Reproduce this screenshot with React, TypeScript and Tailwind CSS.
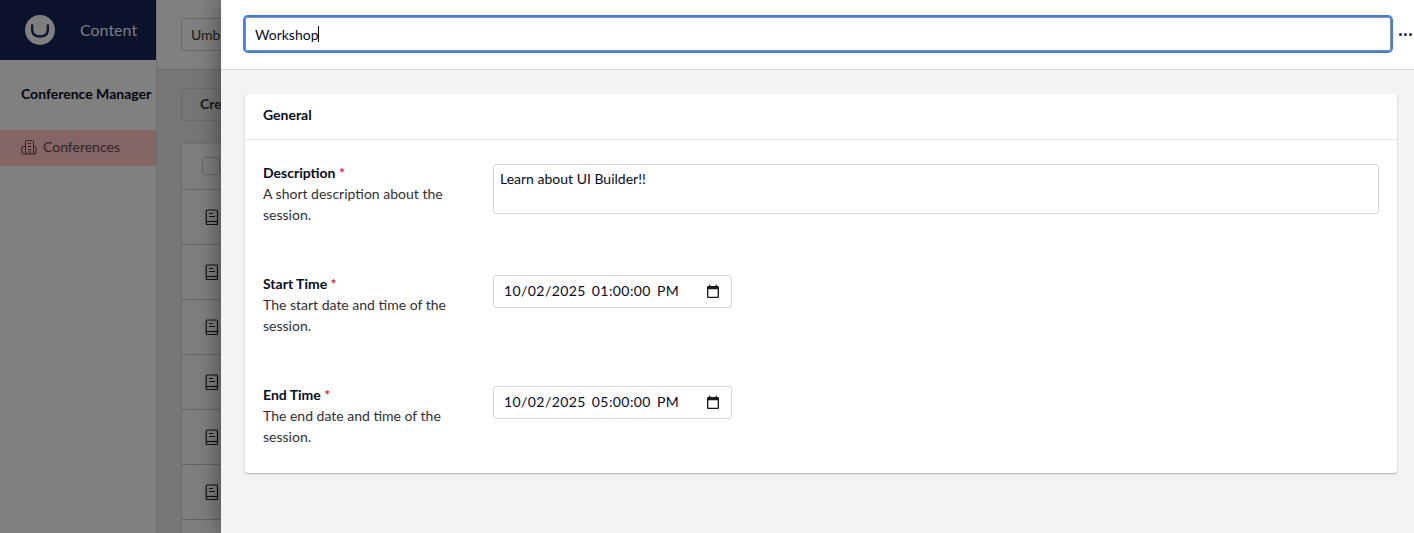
import React from 'react';

const rows = [0, 1, 2, 3, 4, 5, 6];

const BookIcon = () => (
  <svg width="14" height="16" viewBox="0 0 14 16" fill="none" stroke="#111" strokeWidth="1.2" className="shrink-0">
    <path d="M2.5 1h9a1 1 0 0 1 1 1v12.500a1 1 0 0 1-1 1h-9a1.300 1.300 0 0 1-1.300-1.300V2.300A1.300 1.300 0 0 1 2.500 1z" />
    <path d="M1.500 12.500h11" />
    <path d="M4 4.500h4M4 7.500h6" />
  </svg>
);

const BuildingIcon = () => (
  <svg width="16" height="16" viewBox="0 0 16 16" fill="none" stroke="#2f2326" strokeWidth="1" className="shrink-0">
    <path d="M4.500 15V2.500a1 1 0 0 1 1-1h6a1 1 0 0 1 1 1V15" />
    <path d="M4.500 7.500H2a1 1 0 0 0-1 1V14a1 1 0 0 0 1 1h12a1 1 0 0 0 1-1V8.500a1 1 0 0 0-1-1h-1.500" />
    <path d="M7 4.500h3M7 7.500h3M7 10.500h3M7 13h3" />
  </svg>
);

const CalendarIcon = () => (
  <svg width="16" height="16" viewBox="0 0 24 24" fill="#1a1a1a" className="shrink-0">
    <path d="M19 3h-1V1h-2v2H8V1H6v2H5c-1.100 0-2 .9-2 2v14c0 1.100.9 2 2 2h14c1.100 0 2-.9 2-2V5c0-1.100-.9-2-2-2zm0 16H5V8h14v11z" />
  </svg>
);

const Field = ({ label, help, children }: { label: string; help: string[]; children: React.ReactNode }) => (
  <div className="flex">
    <div className="w-[230px] shrink-0 text-[14px] leading-[21px] pr-4">
      <div className="font-bold text-[#060b23]">
        {label} <span className="text-[#d42054]">*</span>
      </div>
      {help.map((h) => (
        <div key={h} className="text-[#303033]">{h}</div>
      ))}
    </div>
    <div className="flex-1 pt-[2px]">{children}</div>
  </div>
);

const DateInput = ({ value }: { value: string }) => (
  <div className="w-[239px] h-[33px] pl-[10px] pr-[10px] flex items-center bg-white border border-[#d8d7d9] rounded-[3px]">
    <input
      defaultValue={value}
      className="flex-1 min-w-0 pb-[3px] text-[14px] tracking-[0.42px] [word-spacing:2px] text-[#060b23] outline-none"
    />
    <CalendarIcon />
  </div>
);

export default function App() {
  return (
    <div className="relative w-[1414px] h-[533px] overflow-hidden flex bg-[#767676] text-[14px]" style={{ fontFamily: 'Lato, sans-serif' }}>
      {/* Dimmed page behind the panel */}
      <aside className="w-[157px] shrink-0 border-r border-[#6f6f6f] bg-[#808080]">
        <div className="h-[60px] bg-[#0a122c] flex items-center pl-[25px] gap-[25px]">
          <svg width="30" height="30" viewBox="0 0 30 30" className="shrink-0">
            <circle cx="15" cy="15" r="15" fill="#7f7f7f" />
            <path d="M7.300 9.500 C7 12 7 14 7.300 16 C7.800 20 11 21.500 15 21.500 C19 21.500 22.200 20 22.700 16 C23 14 23 12 22.700 9.500" fill="none" stroke="#0a122c" strokeWidth="2.300" />
          </svg>
          <span className="text-[16px] text-[#7d7f89]">Content</span>
        </div>
        <div className="h-[70px] pl-[21px] pt-[23px] font-bold text-[14px] text-[#03050f] whitespace-nowrap">Conference Manager</div>
        <div className="h-[36px] bg-[#856665] flex items-center pl-[21px] pb-[3px] gap-[6px] text-[#2f2326]">
          <BuildingIcon />
          <span>Conferences</span>
        </div>
      </aside>

      <main className="flex-1 min-w-0">
        <div className="h-[70px] bg-[#808080] border-b border-[#6f6f6f] pl-[24px] pt-[18px]">
          <div className="w-[60px] h-[33px] border border-[#6b6b6b] rounded-[3px] pl-[9px] leading-[31px] text-[#1a1a1a]">Umbraco</div>
        </div>
        <div className="pl-[24px] pt-[18px]">
          <div className="w-[60px] h-[33px] border border-[#6b6b6b] rounded-[3px] pl-[18px] leading-[30px] font-bold text-[#1a1a1a]">Create</div>
          <div className="mt-[22px] bg-[#7e7e7e] border-l border-t border-[#6f6f6f]">
            <div className="h-[46px] border-b border-[#666] pl-[20px] pt-[13px]">
              <div className="w-[18px] h-[18px] border border-[#666] rounded-[3px]" />
            </div>
            {rows.map((r) => (
              <div key={r} className="h-[55px] border-b border-[#666] pl-[23px] pt-[19px]">
                <BookIcon />
              </div>
            ))}
          </div>
        </div>
      </main>

      {/* Slide-in panel */}
      <section className="absolute top-0 bottom-0 right-0 w-[1193px] bg-[#f3f3f5] shadow-[0_0_24px_rgba(0,0,0,0.45)]">
        <header className="h-[70px] bg-white border-b border-[#d8d7d9] flex items-center pl-[24px]">
          <div className="relative">
            <input
              defaultValue="Workshop"
              className="block w-[1146px] h-[34px] mb-[1px] px-[9px] bg-white border border-[#8f8f8f] rounded-[3px] text-[14px] text-[#060b23] outline-2 outline-[#3b7cf0]"
            />
            <span className="absolute left-[73px] top-[9px] w-px h-[16px] bg-black" />
          </div>
          <div className="flex gap-[2px] ml-[8px]">
            <span className="w-[3px] h-[3px] rounded-full bg-[#1b264f]" />
            <span className="w-[3px] h-[3px] rounded-full bg-[#1b264f]" />
            <span className="w-[3px] h-[3px] rounded-full bg-[#1b264f]" />
          </div>
        </header>

        <div className="pt-[24px] pl-[24px] pr-[17px]">
          <div className="bg-white rounded-[3px] shadow-[0_1px_2px_rgba(0,0,0,0.3)]">
            <div className="h-[46px] border-b border-[#e9e9eb] pl-[18px] pb-[4px] flex items-center font-bold text-[14px] text-[#060b23]">General</div>
            <div className="pt-[22px] pl-[18px] pr-[18px] pb-[26px] flex flex-col gap-[48px]">
              <Field label="Description" help={['A short description about the', 'session.']}>
                <textarea
                  defaultValue="Learn about UI Builder!!"
                  className="block w-full h-[50px] px-[6px] py-[3px] border border-[#d8d7d9] rounded-[3px] text-[14px] leading-[21px] text-[#060b23] outline-none resize-none"
                />
              </Field>
              <Field label="Start Time" help={['The start date and time of the', 'session.']}>
                <DateInput value="10/02/2025 01:00:00 PM" />
              </Field>
              <Field label="End Time" help={['The end date and time of the', 'session.']}>
                <DateInput value="10/02/2025 05:00:00 PM" />
              </Field>
            </div>
          </div>
        </div>
      </section>
    </div>
  );
}
